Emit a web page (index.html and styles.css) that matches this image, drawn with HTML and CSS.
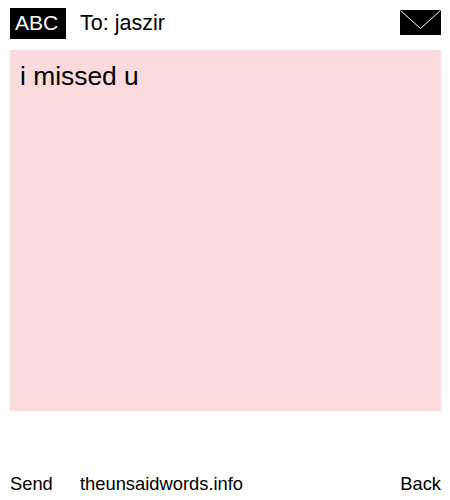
FILE: index.html
```html
<!DOCTYPE html>
<html lang="en">
<head>
    <meta charset="UTF-8">
    <meta name="viewport" content="width=device-width, initial-scale=1.0">
    <title>theunsaidwords.info</title>
    <link rel="stylesheet" href="styles.css">
</head>
<body>
    <div class="container">
        <div class="top-bar">
            <span class="abc">ABC</span>
            <span class="to">To: jaszir</span>
            <svg class="envelope" width="41" height="25" viewBox="0 0 41 25">
                <rect width="41" height="25" fill="#000"/>
                <path d="M0.5 0.5L20.5 18.5L40.5 0.5" fill="none" stroke="#fff" stroke-width="1"/>
            </svg>
        </div>
        <div class="message">i missed u</div>
        <div class="bottom-bar">
            <span class="send">Send</span>
            <span class="site">theunsaidwords.info</span>
            <span class="back">Back</span>
        </div>
    </div>
</body>
</html>
```
FILE: styles.css
```css
body {
    font-family: "Liberation Sans", Arial, sans-serif;
    background-color: white;
    color: black;
    margin: 0;
}
.container {
    width: 431px;
    height: 492px;
    padding: 8px 9px 0 10px;
    display: flex;
    flex-direction: column;
}
.top-bar {
    display: flex;
    align-items: center;
    height: 31px;
    font-size: 21.5px;
}
.abc {
    background: black;
    color: white;
    width: 56px;
    height: 31px;
    padding-left: 5px;
    box-sizing: border-box;
    font-size: 21px;
    line-height: 29px;
}
.to {
    margin-left: 14px;
}
.envelope {
    margin-left: auto;
    margin-bottom: 2px;
    display: block;
}
.message {
    margin-top: 11px;
    height: 361px;
    background: #fadadd;
    padding: 11px 10px;
    box-sizing: border-box;
    font-size: 26.4px;
}
.bottom-bar {
    display: flex;
    margin-top: 62px;
    font-size: 18.33px;
    line-height: 21px;
}
.send {
    width: 42px;
}
.site {
    margin-left: 28px;
}
.back {
    margin-left: auto;
}
```
